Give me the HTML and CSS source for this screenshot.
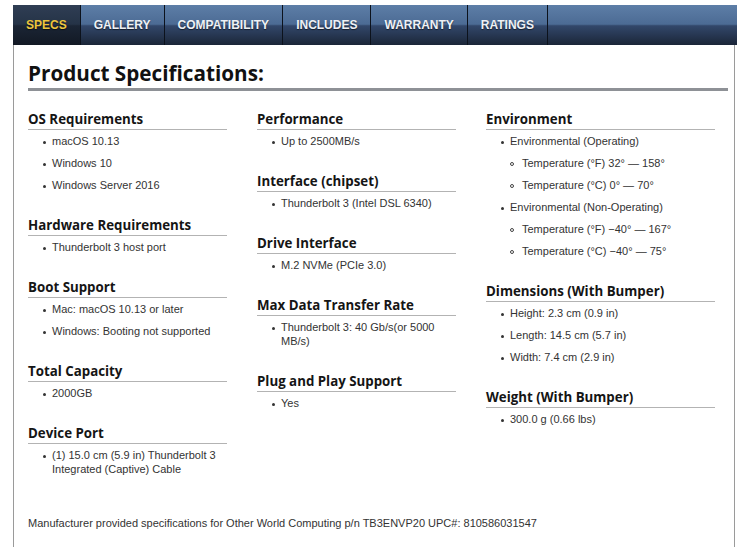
FILE: index.html
```html
<!DOCTYPE html>
<html lang="en">
<head>
<meta charset="utf-8">
<title>Product Specifications</title>
<link rel="stylesheet" href="styles.css">
</head>
<body>
<div class="page">
  <nav class="tabs">
    <a class="tab active">SPECS</a>
    <a class="tab">GALLERY</a>
    <a class="tab">COMPATIBILITY</a>
    <a class="tab">INCLUDES</a>
    <a class="tab">WARRANTY</a>
    <a class="tab">RATINGS</a>
  </nav>
  <main class="panel">
    <h2 class="title">Product Specifications:</h2>
    <div class="grid">
      <div class="col">
        <section class="spec">
          <h3>OS Requirements</h3>
          <ul>
            <li>macOS 10.13</li>
            <li>Windows 10</li>
            <li>Windows Server 2016</li>
          </ul>
        </section>
        <section class="spec">
          <h3>Hardware Requirements</h3>
          <ul>
            <li>Thunderbolt 3 host port</li>
          </ul>
        </section>
        <section class="spec">
          <h3>Boot Support</h3>
          <ul>
            <li>Mac: macOS 10.13 or later</li>
            <li>Windows: Booting not supported</li>
          </ul>
        </section>
        <section class="spec">
          <h3>Total Capacity</h3>
          <ul>
            <li>2000GB</li>
          </ul>
        </section>
        <section class="spec">
          <h3>Device Port</h3>
          <ul>
            <li>(1) 15.0 cm (5.9 in) Thunderbolt 3 Integrated (Captive) Cable</li>
          </ul>
        </section>
      </div>
      <div class="col">
        <section class="spec">
          <h3>Performance</h3>
          <ul>
            <li>Up to 2500MB/s</li>
          </ul>
        </section>
        <section class="spec">
          <h3>Interface (chipset)</h3>
          <ul>
            <li>Thunderbolt 3 (Intel DSL 6340)</li>
          </ul>
        </section>
        <section class="spec">
          <h3>Drive Interface</h3>
          <ul>
            <li>M.2 NVMe (PCIe 3.0)</li>
          </ul>
        </section>
        <section class="spec">
          <h3>Max Data Transfer Rate</h3>
          <ul>
            <li>Thunderbolt 3: 40 Gb/s(or 5000 MB/s)</li>
          </ul>
        </section>
        <section class="spec">
          <h3>Plug and Play Support</h3>
          <ul>
            <li>Yes</li>
          </ul>
        </section>
      </div>
      <div class="col">
        <section class="spec">
          <h3>Environment</h3>
          <ul>
            <li>Environmental (Operating)
              <ul class="sub">
                <li>Temperature (°F) 32° — 158°</li>
                <li>Temperature (°C) 0° — 70°</li>
              </ul>
            </li>
            <li>Environmental (Non-Operating)
              <ul class="sub">
                <li>Temperature (°F) −40° — 167°</li>
                <li>Temperature (°C) −40° — 75°</li>
              </ul>
            </li>
          </ul>
        </section>
        <section class="spec">
          <h3>Dimensions (With Bumper)</h3>
          <ul>
            <li>Height: 2.3 cm (0.9 in)</li>
            <li>Length: 14.5 cm (5.7 in)</li>
            <li>Width: 7.4 cm (2.9 in)</li>
          </ul>
        </section>
        <section class="spec">
          <h3>Weight (With Bumper)</h3>
          <ul>
            <li>300.0 g (0.66 lbs)</li>
          </ul>
        </section>
      </div>
    </div>
    <p class="footnote">Manufacturer provided specifications for Other World Computing p/n TB3ENVP20 UPC#: 810586031547</p>
  </main>
</div>
</body>
</html>
```
FILE: styles.css
```css
html, body {
  margin: 0;
  padding: 0;
  background: #ffffff;
  overflow: hidden;
}

.page {
  padding: 5px 0 0 13px;
}

.tabs {
  display: flex;
  width: 724px;
  height: 40px;
  background: linear-gradient(to bottom, #5d7ea7 0%, #4c6b94 48%, #32476a 52%, #1b2638 100%);
}

.tab {
  display: block;
  padding: 0 13px;
  border-right: 1px solid #0c121c;
  font-family: "Liberation Sans", Arial, sans-serif;
  font-weight: bold;
  font-size: 12px;
  line-height: 40px;
  color: #eef1f5;
  text-shadow: 0 1px 1px rgba(0, 0, 0, 0.55);
  white-space: nowrap;
}

.tab.active {
  color: #ecc53c;
  background: linear-gradient(to bottom, #2f3e54 0%, #253347 48%, #1b2535 52%, #121924 100%);
}

.panel {
  box-sizing: border-box;
  width: 722px;
  padding: 14px 6px 17px 14px;
  border-left: 1px solid #9a9a9a;
  border-right: 1px solid #9a9a9a;
}

.title {
  margin: 0 0 19px;
  font-family: "Open Sans", sans-serif;
  font-weight: 700;
  font-size: 20.7px;
  line-height: 29px;
  color: #111111;
  border-bottom: 3px solid #8e9196;
  width: 700px;
  box-sizing: border-box;
}

.grid {
  display: grid;
  grid-template-columns: 229px 229px 229px;
  align-items: start;
}

.col {
  padding-right: 30px;
}

.col:last-child {
  padding-right: 0;
}

.spec {
  padding-bottom: 16px;
}

.spec h3 {
  margin: 0;
  font-family: "Open Sans", sans-serif;
  font-weight: 700;
  font-size: 13.3px;
  line-height: 19px;
  color: #151515;
  border-bottom: 1px solid #b3b3b3;
}

.spec ul {
  list-style: none;
  margin: 4px 0 0;
  padding: 0 0 0 24px;
}

.spec li {
  margin: 0 0 8px;
  font-family: "Liberation Sans", Arial, sans-serif;
  font-size: 11px;
  line-height: 14px;
  color: #333333;
}

.spec li::before {
  content: "";
  display: inline-block;
  width: 3px;
  height: 3px;
  border-radius: 50%;
  background: #333333;
  margin-left: -9px;
  margin-right: 6px;
  vertical-align: middle;
}

.spec ul.sub {
  margin-top: 8px;
  padding-left: 12px;
}

.spec ul.sub li::before {
  box-sizing: border-box;
  width: 4px;
  height: 4px;
  background: transparent;
  border: 1px solid #444444;
  margin-left: -12px;
  margin-right: 8px;
}

.footnote {
  margin: 16px 0 0;
  font-family: "Liberation Sans", Arial, sans-serif;
  font-size: 11px;
  line-height: 14px;
  color: #333333;
}
```
